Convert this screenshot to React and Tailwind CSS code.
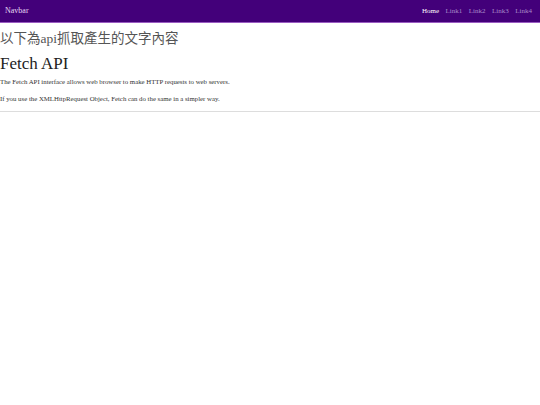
import React from 'react';

export default function App() {
  const links = ["Link1", "Link2", "Link3", "Link4"];
  return (
    <div className="min-h-[405px] bg-white text-[#333]" style={{ fontFamily: '"Liberation Serif", "Noto Sans CJK TC", serif' }}>
      {/* Navbar */}
      <nav className="flex h-[23px] items-center justify-between bg-[#43007a] border-b border-[#9a5bc2] px-[5px]">
        <span className="text-[8px] text-[#e6d9f2]">Navbar</span>
        <div className="flex items-center gap-[6.5px] pr-[3px] text-[7px]">
          <span className="text-white">Home</span>
          {links.map((l) => (
            <span key={l} className="text-[#a98bc9]">{l}</span>
          ))}
        </div>
      </nav>

      {/* Content */}
      <div className="border-b border-[#dddddd] pb-[8px]">
        <h2 className="mt-[6px] text-[13.5px] leading-[20px] text-[#555]">以下為api抓取產生的文字內容</h2>
        <h1 className="mt-[4px] text-[17px] leading-[22px] text-[#222]">Fetch API</h1>
        <p className="mt-[2px] text-[6.8px] leading-[9px]">The Fetch API interface allows web browser to make HTTP requests to web servers.</p>
        <p className="mt-[8px] text-[6.8px] leading-[9px]">If you use the XMLHttpRequest Object, Fetch can do the same in a simpler way.</p>
      </div>
    </div>
  );
}
